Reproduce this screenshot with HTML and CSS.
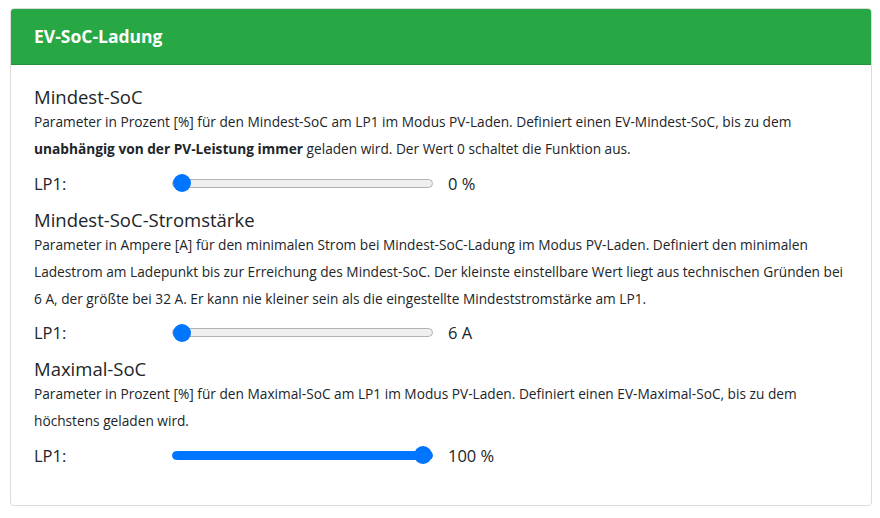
FILE: index.html
```html
<!DOCTYPE html>
<html lang="de">
<head>
<meta charset="utf-8">
<link rel="stylesheet" href="styles.css">
</head>
<body>
<div class="card">
  <div class="card-header">EV-SoC-Ladung</div>
  <div class="card-body">
    <section class="setting">
      <h5 class="title">Mindest-SoC</h5>
      <p class="desc">Parameter in Prozent [%] für den Mindest-SoC am LP1 im Modus PV-Laden. Definiert einen EV-Mindest-SoC, bis zu dem <b>unabhängig von der PV-Leistung immer</b> geladen wird. Der Wert 0 schaltet die Funktion aus.</p>
      <div class="row">
        <label class="lbl">LP1:</label>
        <input type="range" class="slider" min="0" max="100" value="0">
        <span class="val">0 %</span>
      </div>
    </section>
    <section class="setting">
      <h5 class="title">Mindest-SoC-Stromstärke</h5>
      <p class="desc">Parameter in Ampere [A] für den minimalen Strom bei Mindest-SoC-Ladung im Modus PV-Laden. Definiert den minimalen Ladestrom am Ladepunkt bis zur Erreichung des Mindest-SoC. Der kleinste einstellbare Wert liegt aus technischen Gründen bei 6 A, der größte bei 32 A. Er kann nie kleiner sein als die eingestellte Mindeststromstärke am LP1.</p>
      <div class="row">
        <label class="lbl">LP1:</label>
        <input type="range" class="slider" min="6" max="32" value="6">
        <span class="val">6 A</span>
      </div>
    </section>
    <section class="setting">
      <h5 class="title">Maximal-SoC</h5>
      <p class="desc">Parameter in Prozent [%] für den Maximal-SoC am LP1 im Modus PV-Laden. Definiert einen EV-Maximal-SoC, bis zu dem höchstens geladen wird.</p>
      <div class="row">
        <label class="lbl">LP1:</label>
        <input type="range" class="slider full" min="0" max="100" value="100">
        <span class="val">100 %</span>
      </div>
    </section>
  </div>
</div>
</body>
</html>
```
FILE: styles.css
```css
* { box-sizing: border-box; }
html, body { margin: 0; background: #fff; }
body {
  padding: 8px 8px 0 10px;
  font-family: "Open Sans", "Noto Sans", sans-serif;
  color: #212529;
}
.card {
  width: 862px;
  border: 1px solid #dcdcdc;
  border-radius: 4px;
  overflow: hidden;
}
.card-header {
  background: #28a745;
  color: #fff;
  font-weight: 700;
  font-size: 17.5px;
  height: 56px;
  line-height: 54px;
  padding: 0 23px;
  border-bottom: 1px solid #23933c;
}
.card-body {
  padding: 21px 23px 24px 23px;
}
.title {
  margin: 0;
  font-size: 18.5px;
  font-weight: 500;
  line-height: 22px;
}
.desc {
  margin: 0;
  font-size: 13.7px;
  line-height: 27px;
}
.row {
  display: grid;
  grid-template-columns: 138px 261px auto;
  align-items: center;
  height: 24px;
  margin: 9px 0 13.5px;
}
.lbl { font-size: 16.5px; }
.val { font-size: 16.5px; margin-left: 15px; }
.slider {
  -webkit-appearance: none;
  appearance: none;
  width: 261px;
  height: 18px;
  margin: 0;
  background: transparent;
}
.slider::-webkit-slider-runnable-track {
  height: 9px;
  background: #efefef;
  border: 1px solid #b2b2b2;
  border-radius: 5px;
}
.slider::-webkit-slider-thumb {
  -webkit-appearance: none;
  width: 18px;
  height: 18px;
  margin-top: -5.5px;
  border-radius: 50%;
  background: #0075ff;
  border: none;
}
.slider.full::-webkit-slider-runnable-track {
  background: #0075ff;
  border-color: #0075ff;
}
```
